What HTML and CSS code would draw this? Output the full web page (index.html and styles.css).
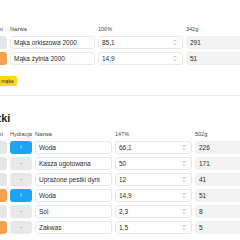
FILE: index.html
```html
<!DOCTYPE html>
<html lang="pl">
<head>
<meta charset="utf-8">
<link rel="stylesheet" href="styles.css">
</head>
<body>
<div class="page">
  <section class="card card-flour">
    <div class="grid grid-flour">
      <div class="lbl">Plan</div>
      <div class="lbl">Nazwa</div>
      <div class="lbl">100%</div>
      <div class="lbl">342g</div>

      <div class="swatch gray"></div>
      <div class="field">Mąka orkiszowa 2000</div>
      <div class="field num">85,1<svg class="spin" viewBox="0 0 4 7"><path d="M0.8 2.6 L2 1.2 L3.2 2.6 M0.8 4.4 L2 5.8 L3.2 4.4"/></svg></div>
      <div class="field ro">291</div>

      <div class="swatch orange"></div>
      <div class="field">Mąka żytnia 2000</div>
      <div class="field num">14,9<svg class="spin" viewBox="0 0 4 7"><path d="M0.8 2.6 L2 1.2 L3.2 2.6 M0.8 4.4 L2 5.8 L3.2 4.4"/></svg></div>
      <div class="field ro">51</div>
    </div>
    <button class="add">Dodaj mąkę</button>
  </section>

  <section class="card card-extra">
    <h2 class="title">Dodatki</h2>
    <div class="grid grid-extra">
      <div class="lbl">Plan</div>
      <div class="lbl">Hydracja</div>
      <div class="lbl">Nazwa</div>
      <div class="lbl">147%</div>
      <div class="lbl">502g</div>

      <div class="swatch gray"></div>
      <div class="hyd on">I</div>
      <div class="field">Woda</div>
      <div class="field num">66,1<svg class="spin" viewBox="0 0 4 7"><path d="M0.8 2.6 L2 1.2 L3.2 2.6 M0.8 4.4 L2 5.8 L3.2 4.4"/></svg></div>
      <div class="field ro">226</div>

      <div class="swatch gray"></div>
      <div class="hyd">-</div>
      <div class="field">Kasza ugotowana</div>
      <div class="field num">50<svg class="spin" viewBox="0 0 4 7"><path d="M0.8 2.6 L2 1.2 L3.2 2.6 M0.8 4.4 L2 5.8 L3.2 4.4"/></svg></div>
      <div class="field ro">171</div>

      <div class="swatch gray"></div>
      <div class="hyd">-</div>
      <div class="field">Uprażone pestki dyni</div>
      <div class="field num">12<svg class="spin" viewBox="0 0 4 7"><path d="M0.8 2.6 L2 1.2 L3.2 2.6 M0.8 4.4 L2 5.8 L3.2 4.4"/></svg></div>
      <div class="field ro">41</div>

      <div class="swatch orange"></div>
      <div class="hyd on">I</div>
      <div class="field">Woda</div>
      <div class="field num">14,9<svg class="spin" viewBox="0 0 4 7"><path d="M0.8 2.6 L2 1.2 L3.2 2.6 M0.8 4.4 L2 5.8 L3.2 4.4"/></svg></div>
      <div class="field ro">51</div>

      <div class="swatch gray"></div>
      <div class="hyd">-</div>
      <div class="field">Sól</div>
      <div class="field num">2,3<svg class="spin" viewBox="0 0 4 7"><path d="M0.8 2.6 L2 1.2 L3.2 2.6 M0.8 4.4 L2 5.8 L3.2 4.4"/></svg></div>
      <div class="field ro">8</div>

      <div class="swatch orange"></div>
      <div class="hyd">-</div>
      <div class="field">Zakwas</div>
      <div class="field num">1,5<svg class="spin" viewBox="0 0 4 7"><path d="M0.8 2.6 L2 1.2 L3.2 2.6 M0.8 4.4 L2 5.8 L3.2 4.4"/></svg></div>
      <div class="field ro">5</div>
    </div>
  </section>
</div>
</body>
</html>
```

FILE: styles.css
```css
html, body {
  margin: 0;
  padding: 0;
  overflow: hidden;
  background: #ffffff;
  width: 240px;
  height: 240px;
}

.page {
  margin-left: -8px;
  width: 300px;
  font-family: "Liberation Sans", Arial, sans-serif;
  color: #2b2b2b;
}

.card {
  background: #ffffff;
}

.card-flour {
  padding-top: 25px;
  padding-bottom: 9px;
  border-bottom: 1px solid #ececec;
  box-shadow: 0 1px 2px rgba(0, 0, 0, 0.04);
}

.card-extra {
  padding-top: 15px;
}

.grid {
  display: grid;
  column-gap: 3px;
  row-gap: 3px;
  grid-auto-rows: 13px;
  align-items: stretch;
}

.grid-flour {
  grid-template-columns: 15px 85px 85px 70px;
  grid-template-rows: 8px;
}

.grid-extra {
  grid-template-columns: 15px 22px 77px 77px 70px;
  grid-template-rows: 8px;
}

.lbl {
  font-size: 5.5px;
  line-height: 8px;
  color: #444444;
  white-space: nowrap;
  overflow: hidden;
}

.swatch {
  border-radius: 3px;
}

.swatch.gray {
  background: #e6e6e6;
}

.swatch.orange {
  background: #f7a14c;
}

.field {
  box-sizing: border-box;
  border: 1px solid #e7e7e7;
  border-radius: 3px;
  background: #ffffff;
  font-size: 6.5px;
  line-height: 11px;
  padding: 0 3px;
  color: #2b2b2b;
  white-space: nowrap;
  overflow: hidden;
  display: flex;
  align-items: center;
}

.field.num {
  justify-content: space-between;
}

.field.ro {
  background: #f3f3f3;
  border-color: #efefef;
}

.spin {
  width: 4px;
  height: 7px;
  margin-right: 2px;
  fill: none;
  stroke: #8a8a8a;
  stroke-width: 0.6;
}

.hyd {
  border-radius: 3px;
  background: #e8e8e8;
  color: #555555;
  font-size: 6px;
  line-height: 13px;
  text-align: center;
}

.hyd.on {
  background: #1da5f0;
  color: #ffffff;
  font-size: 5px;
}

.add {
  display: block;
  margin-top: 11px;
  margin-left: -9px;
  height: 10px;
  padding: 0 3px 0 4px;
  border: none;
  border-radius: 2px;
  background: #ffd80f;
  color: #2b2b2b;
  font-family: "Liberation Sans", Arial, sans-serif;
  font-size: 5px;
  line-height: 10px;
}

.title {
  margin: 0 0 5px -22px;
  font-size: 11px;
  line-height: 14px;
  font-weight: bold;
  color: #1f1f1f;
}
```
